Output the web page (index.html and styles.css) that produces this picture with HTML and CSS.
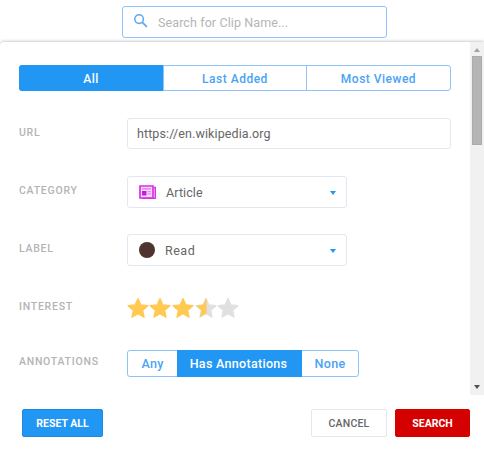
FILE: index.html
```html
<!DOCTYPE html>
<html lang="en">
<head>
<meta charset="utf-8">
<title>Search clips</title>
<link rel="stylesheet" href="styles.css">
</head>
<body>
<header class="top">
  <div class="search">
    <svg class="search-icon" viewBox="0 0 16 16" width="15" height="15"><circle cx="6.5" cy="6.5" r="4.6" fill="none" stroke="#5aa9f0" stroke-width="1.6"/><path d="M10 10l4.8 4.8" stroke="#5aa9f0" stroke-width="1.8" fill="none"/></svg>
    <span class="placeholder">Search for Clip Name...</span>
  </div>
</header>
<main class="panel">
  <div class="body">
    <div class="form">
      <div class="tabs">
        <div class="tab on">All</div>
        <div class="tab">Last Added</div>
        <div class="tab">Most Viewed</div>
      </div>
      <div class="row row-url">
        <div class="label">URL</div>
        <div class="field url">https://en.wikipedia.org</div>
      </div>
      <div class="row row-cat">
        <div class="label">CATEGORY</div>
        <div class="field select">
          <svg class="cat-icon" viewBox="0 0 17 14" width="17" height="14"><path d="M1 1h13v12H1z" fill="#f8d8fb" stroke="#d92fe6" stroke-width="1.7"/><path d="M15 2.5h1.2V13.4H3" fill="none" stroke="#d92fe6" stroke-width="1.5"/><path d="M3 3h9v1.6H3z" fill="#e48bea"/><path d="M3 6h4.5v4.5H3z" fill="#c420d2"/><path d="M8.6 6H12v1.2H8.6zM8.6 8.2H12v1.2H8.6z" fill="#e48bea"/></svg>
          <span class="value">Article</span>
          <span class="caret"></span>
        </div>
      </div>
      <div class="row row-label">
        <div class="label">LABEL</div>
        <div class="field select">
          <span class="dot"></span>
          <span class="value read">Read</span>
          <span class="caret"></span>
        </div>
      </div>
      <div class="row row-int">
        <div class="label">INTEREST</div>
        <div class="stars">
          <svg viewBox="0 0 24 24" width="24" height="24" class="star"><path class="full" d="M12 2.5l2.9 6.4 7 .8-5.2 4.7 1.4 6.9-6.1-3.5-6.1 3.5 1.4-6.9-5.2-4.7 7-.8z"/></svg>
          <svg viewBox="0 0 24 24" width="24" height="24" class="star"><path class="full" d="M12 2.5l2.9 6.4 7 .8-5.2 4.7 1.4 6.9-6.1-3.5-6.1 3.5 1.4-6.9-5.2-4.7 7-.8z"/></svg>
          <svg viewBox="0 0 24 24" width="24" height="24" class="star"><path class="full" d="M12 2.5l2.9 6.4 7 .8-5.2 4.7 1.4 6.9-6.1-3.5-6.1 3.5 1.4-6.9-5.2-4.7 7-.8z"/></svg>
          <svg viewBox="0 0 24 24" width="24" height="24" class="star"><path class="none" d="M12 2.5l2.9 6.4 7 .8-5.2 4.7 1.4 6.9-6.1-3.5-6.1 3.5 1.4-6.9-5.2-4.7 7-.8z"/><path class="full half" d="M12.5 2.5v15.4l-.5-.3-6.1 3.5 1.4-6.9-5.2-4.7 7-.8 2.9-6.4z"/></svg>
          <svg viewBox="0 0 24 24" width="24" height="24" class="star"><path class="none" d="M12 2.5l2.9 6.4 7 .8-5.2 4.7 1.4 6.9-6.1-3.5-6.1 3.5 1.4-6.9-5.2-4.7 7-.8z"/></svg>
        </div>
      </div>
      <div class="row row-ann">
        <div class="label">ANNOTATIONS</div>
        <div class="seg">
          <div class="seg-item any">Any</div>
          <div class="seg-item has on">Has Annotations</div>
          <div class="seg-item none-item">None</div>
        </div>
      </div>
    </div>
    <div class="scrollbar">
      <span class="arrow up"></span>
      <span class="thumb"></span>
      <span class="arrow down"></span>
    </div>
  </div>
  <footer class="foot">
    <button class="btn reset">RESET ALL</button>
    <div class="foot-right">
      <button class="btn cancel">CANCEL</button>
      <button class="btn go">SEARCH</button>
    </div>
  </footer>
</main>
</body>
</html>
```
FILE: styles.css
```css
* { box-sizing: border-box; }
html, body { margin: 0; height: 100%; overflow: hidden; }
body { width: 484px; height: 450px; background: #fff; font-family: Roboto, "Liberation Sans", sans-serif; color: #666; }

.top { height: 42px; padding: 6px 0 0 122px; }
.search { width: 265px; height: 32px; border: 1px solid #8fc3f7; border-radius: 3px; display: flex; align-items: center; padding-left: 10px; }
.search-icon { margin-top: -3px; }
.placeholder { margin-left: 10px; font-size: 12.5px; letter-spacing: .1px; color: #b5b5b5; }

.panel { height: 408px; border-radius: 4px 0 0 0; box-shadow: 0 -1px 3px rgba(0,0,0,.2); background: #fff; display: flex; flex-direction: column; }
.body { height: 353px; display: flex; overflow: hidden; }
.form { width: 470px; padding: 23px 19px 0 19px; }

.tabs { width: 432px; height: 26px; display: grid; grid-template-columns: 143px 143px 144px; border: 1px solid #8fc3f7; border-radius: 3px; }
.tab { display: flex; align-items: center; justify-content: center; padding-top: 1px; font-size: 12px; font-weight: 500; letter-spacing: .5px; color: #4aa3f5; border-left: 1px solid #8fc3f7; }
.tab:first-child { border-left: 0; }
.tab.on { background: #2196f3; color: #fff; margin: -1px 0 -1px -1px; border-radius: 3px 0 0 3px; }

.row { display: flex; align-items: flex-start; }
.label { width: 108px; font-size: 10.5px; font-weight: 500; letter-spacing: .75px; color: #b4b4b4; }
.row-url { margin-top: 27px; }
.row-url .label, .row-cat .label, .row-label .label { padding-top: 8px; }
.row-cat { margin-top: 27px; }
.row-label { margin-top: 26px; }
.row-int { margin-top: 30px; }
.row-ann { margin-top: 30px; }
.row-int .label { padding-top: 4px; }
.row-ann .label { padding-top: 5px; }

.field { border: 1px solid #e1e8f0; border-radius: 3px; font-size: 12.5px; color: #666; }
.url { width: 324px; height: 31px; display: flex; align-items: center; padding-left: 9px; letter-spacing: .1px; }
.select { width: 220px; height: 32px; display: flex; align-items: center; padding-left: 11px; position: relative; }
.value { margin-left: 10px; letter-spacing: .1px; }
.value.read { margin-left: 10px; letter-spacing: .5px; }
.cat-icon { flex: none; }
.dot { width: 16px; height: 16px; border-radius: 50%; background: #4e342e; flex: none; }
.caret { position: absolute; right: 10px; top: 14px; width: 0; height: 0; border-left: 3.5px solid transparent; border-right: 3.5px solid transparent; border-top: 4px solid #2196f3; }

.stars { display: flex; gap: 0; margin-left: -1.5px; }
.star { display: block; margin-right: -1.3px; }
.full, .none { stroke-width: 1.2; stroke-linejoin: round; }
.full { fill: #ffc952; stroke: #ffc952; }
.none { fill: #e0e0e0; stroke: #e0e0e0; }
.half { stroke: none; }

.seg { display: flex; height: 27px; border: 1px solid #8fc3f7; border-radius: 3px; width: 232px; }
.seg-item { display: flex; align-items: center; justify-content: center; font-size: 12.5px; font-weight: 500; letter-spacing: .3px; color: #4aa3f5; }
.any { width: 49px; }
.has { width: 125px; background: #2196f3; color: #fff; margin: -1px 0; padding-right: 2px; }
.none-item { flex: 1; }

.scrollbar { width: 14px; background: #f1f1f1; display: flex; flex-direction: column; align-items: center; }
.arrow { width: 0; height: 0; border-left: 3.5px solid transparent; border-right: 3.5px solid transparent; }
.up { margin-top: 6px; border-bottom: 4px solid #a3a3a3; }
.thumb { width: 10px; height: 89px; margin-top: 4px; background: #b5b5b5; border: 1px solid #acacac; }
.down { margin-top: auto; margin-bottom: 6px; border-top: 4px solid #505050; }

.foot { flex: 1; display: flex; justify-content: space-between; align-items: flex-start; padding: 14px 14px 0 22px; }
.foot-right { display: flex; gap: 8px; }
.btn { height: 28px; border-radius: 2px; font-family: inherit; font-size: 10.5px; font-weight: 700; padding: 0; cursor: pointer; }
.reset { width: 81px; background: #2196f3; border: 1px solid #1e88e5; color: #fff; }
.cancel { width: 76px; background: #fff; border: 1px solid #e1e8f0; color: #666; font-weight: 500; letter-spacing: .2px; }
.go { width: 75px; background: #d50000; border: 1px solid #d50000; color: #fff; }
```
